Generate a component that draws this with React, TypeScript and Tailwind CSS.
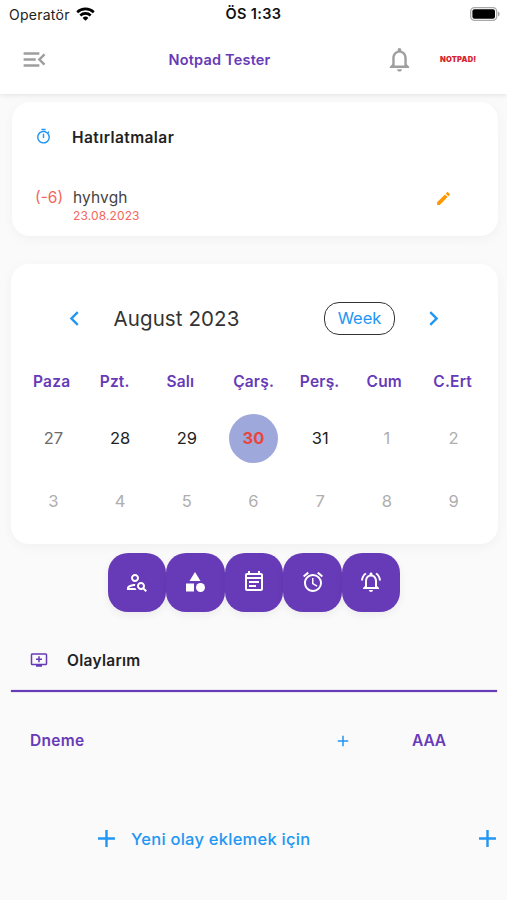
import {
  MdAdd,
  MdAlarm,
  MdCategory,
  MdChevronLeft,
  MdChevronRight,
  MdEdit,
  MdMenuOpen,
  MdNotificationsNone,
  MdOutlineAddToQueue,
  MdOutlineEventNote,
  MdOutlineNotificationsActive,
  MdOutlinePersonSearch,
  MdOutlineTimer,
} from 'react-icons/md';

const weekDays = ['Paza', 'Pzt.', 'Salı', 'Çarş.', 'Perş.', 'Cum', 'C.Ert'];

const days = [
  { day: 27, style: 'text-[#6b6b6b]' },
  { day: 28, style: 'text-[#222222]' },
  { day: 29, style: 'text-[#222222]' },
  { day: 30, style: 'bg-[#9fa8da] font-bold text-[#e8453f]' },
  { day: 31, style: 'text-[#222222]' },
  { day: 1, style: 'text-[#aeaeae]' },
  { day: 2, style: 'text-[#aeaeae]' },
  { day: 3, style: 'text-[#aeaeae]' },
  { day: 4, style: 'text-[#aeaeae]' },
  { day: 5, style: 'text-[#aeaeae]' },
  { day: 6, style: 'text-[#aeaeae]' },
  { day: 7, style: 'text-[#aeaeae]' },
  { day: 8, style: 'text-[#aeaeae]' },
  { day: 9, style: 'text-[#aeaeae]' },
];

const actions = [
  { name: 'search', Icon: MdOutlinePersonSearch },
  { name: 'category', Icon: MdCategory },
  { name: 'notes', Icon: MdOutlineEventNote },
  { name: 'alarm', Icon: MdAlarm },
  { name: 'notifications', Icon: MdOutlineNotificationsActive },
];

function StatusBar() {
  return (
    <div className="grid h-7 grid-cols-3 items-center pr-[7px] pl-[9px] text-black">
      <div className="flex items-center gap-1.5">
        <span className="text-[14px] tracking-[0.25px] text-[#222222]">Operatör</span>
        <svg width="19" height="14" viewBox="0 0 19 14" fill="none" stroke="currentColor" strokeWidth="2.6">
          <path d="M1.2 5.2a12 12 0 0 1 16.6 0" />
          <path d="M4.3 8.5a7.5 7.5 0 0 1 10.4 0" />
          <path d="M9.5 13.8 6.6 10.9a4.1 4.1 0 0 1 5.8 0z" fill="currentColor" stroke="none" />
        </svg>
      </div>
      <span className="pr-0.5 text-center text-[14.5px] font-semibold tracking-[0.35px] whitespace-nowrap text-[#111111]">ÖS 1:33</span>
      <svg className="justify-self-end" width="30" height="14" viewBox="0 0 30 14">
        <rect x="0.7" y="0.7" width="26" height="12.6" rx="3.8" fill="#fff" stroke="#a8a8a8" strokeWidth="1.3" />
        <rect x="2.4" y="2.3" width="22.6" height="9.4" rx="2" fill="#000" />
        <path d="M28 4.6c2.2.9 2.2 3.9 0 4.8z" fill="#a8a8a8" />
      </svg>
    </div>
  );
}

function Header() {
  return (
    <header className="relative bg-white shadow-[0_1px_5px_rgba(0,0,0,0.1)]">
      <StatusBar />
      <div className="flex h-[66px] items-center pb-[3px]">
        <MdMenuOpen className="ml-5 size-[29px] text-[#9e9e9e]" />
        <h1 className="ml-[119.5px] w-[206px] text-[14.5px] font-semibold tracking-[0.2px] text-[#673ab7]">Notpad Tester</h1>
        <MdNotificationsNone className="ml-[10.5px] size-[29px] text-[#9e9e9e]" />
        <span className="ml-[26px] text-[7.5px] font-black tracking-[0.2px] text-[#d8232f]">NOTPAD!</span>
      </div>
    </header>
  );
}

function Reminders() {
  return (
    <section className="mt-2 mr-[9px] ml-3 h-[134px] rounded-[18px] bg-white shadow-[0_3px_12px_rgba(0,0,0,0.04)]">
      <div className="flex h-[70px] items-center pl-[23px]">
        <MdOutlineTimer className="mb-0.5 size-[17px] text-[#2196f3]" />
        <h2 className="mt-px ml-5 text-[15.5px] font-semibold tracking-[0.42px] text-[#222222]">Hatırlatmalar</h2>
      </div>
      <div className="flex items-start pt-4 pl-[23px]">
        <span className="w-[38px] text-[15.5px] leading-5 text-[#f4665c]">(-6)</span>
        <div className="w-[362px]">
          <p className="text-[15.5px] leading-5 tracking-[0.15px] text-[#444444]">hyhvgh</p>
          <p className="text-[12px] leading-4 tracking-[0.12px] text-[#f4665c]">23.08.2023</p>
        </div>
        <MdEdit className="mt-0.5 size-[17px] text-[#ff9800]" />
      </div>
    </section>
  );
}

function Calendar() {
  return (
    <section className="mt-7 mr-[9px] ml-[11px] h-[280px] rounded-[18px] bg-white px-[9px] shadow-[0_3px_12px_rgba(0,0,0,0.04)]">
      <div className="flex h-[109px] items-center">
        <MdChevronLeft className="ml-[39.5px] size-[29px] text-[#2196f3]" />
        <h2 className="mt-0.5 ml-[25px] w-[210.5px] text-[20.5px] tracking-[0.1px] text-[#333333]">August 2023</h2>
        <button className="h-[33px] w-[71px] rounded-[15px] border-[1.5px] border-[#333333] text-[16.5px] text-[#2196f3]">
          Week
        </button>
        <MdChevronRight className="ml-6 size-[29px] text-[#2196f3]" />
      </div>
      <div className="grid w-[467px] grid-cols-7 text-[15.5px] leading-[18px] font-semibold tracking-[0.2px] text-[#673ab7]">
        {weekDays.map((day) => (
          <span key={day} className="pl-[13px]">
            {day}
          </span>
        ))}
      </div>
      <div className="mt-4 grid w-[467px] grid-cols-7">
        {days.map(({ day, style }) => (
          <div key={day} className="flex h-[63px] items-center justify-center">
            <span className={`flex size-[49px] items-center justify-center rounded-full text-[16.5px] ${style}`}>{day}</span>
          </div>
        ))}
      </div>
    </section>
  );
}

function Actions() {
  return (
    <div className="mt-[9px] flex justify-center pl-px">
      {actions.map(({ name, Icon }) => (
        <button
          key={name}
          className="flex size-[58.6px] items-center justify-center rounded-[20px] bg-[#673ab7] text-white shadow-[0_3px_8px_rgba(0,0,0,0.06)]"
        >
          <Icon className="size-6" />
        </button>
      ))}
    </div>
  );
}

function Events() {
  return (
    <section className="mr-2.5 ml-[11px]">
      <div className="mt-[18.4px] flex h-[60px] items-center pl-[19px]">
        <MdOutlineAddToQueue className="size-[18px] text-[#673ab7]" />
        <h2 className="mt-px ml-[19px] text-[15.5px] font-semibold tracking-[0.28px] text-[#222222]">Olaylarım</h2>
      </div>
      <div className="h-0.5 bg-[#673ab7] shadow-[0_0_1px_#673ab7]" />
      <div className="flex h-[98px] items-center pl-[19px] text-[15.5px] font-semibold tracking-[0.3px] text-[#673ab7]">
        <span className="w-[304px]">Dneme</span>
        <MdAdd className="size-[18px] text-[#2196f3]" />
        <span className="ml-[60px] tracking-[-0.1px]">AAA</span>
      </div>
      <div className="flex h-[98px] items-center text-[#2196f3]">
        <MdAdd className="ml-[80.5px] size-[29px]" />
        <span className="ml-[10.5px] text-[16.5px] font-medium tracking-[0.25px]">Yeni olay eklemek için</span>
        <MdAdd className="-mr-[5px] ml-auto size-[29px]" />
      </div>
    </section>
  );
}

export default function App() {
  return (
    <div className="h-[900px] w-[507px] overflow-hidden bg-[#fafafa] font-[Inter,sans-serif]">
      <Header />
      <Reminders />
      <Calendar />
      <Actions />
      <Events />
    </div>
  );
}
